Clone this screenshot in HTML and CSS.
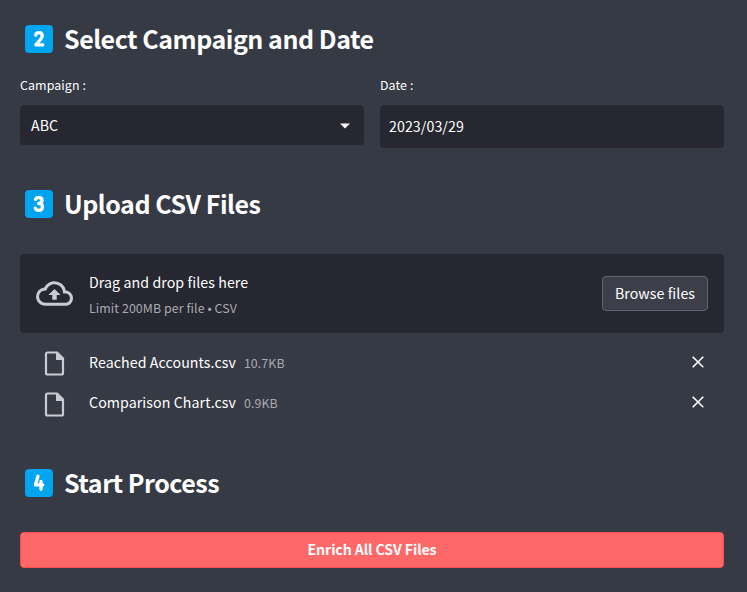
FILE: index.html
```
<!DOCTYPE html>
<html lang="en">
<head>
<meta charset="utf-8">
<title>Campaign enrichment</title>
<link rel="stylesheet" href="styles.css">
</head>
<body>
<main class="page">
  <h2 class="heading"><svg class="keycap" viewBox="0 0 28 28"><rect width="28" height="28" rx="4"/><path d="M10.8 10Q11.2 7.7 13.9 7.7Q17.4 7.7 17.2 10.8Q17 13.3 10.8 19.8H17.8"/></svg><span class="heading-text">Select Campaign and Date</span></h2>
  <div class="fields">
    <div class="field">
      <label class="label">Campaign :</label>
      <div class="control select"><span>ABC</span><svg class="caret" viewBox="0 0 10 6"><path d="M0 .5h10L5 5.5z"/></svg></div>
    </div>
    <div class="field">
      <label class="label">Date :</label>
      <div class="control date"><span>2023/03/29</span></div>
    </div>
  </div>
  <h2 class="heading upload-heading"><svg class="keycap" viewBox="0 0 28 28"><rect width="28" height="28" rx="4"/><path d="M10.5 9.3Q11.5 7.4 13.8 7.5Q17 7.7 17 10.3Q17 13.2 13.6 13.4Q17.5 13.5 17.5 16.8Q17.3 20.3 13.8 20.4Q11.2 20.4 10.3 18.2"/></svg><span class="heading-text">Upload CSV Files</span></h2>
  <section class="dropzone">
    <svg class="cloud" viewBox="0 0 24 24"><path d="M19.35 10.04A7.49 7.49 0 0012 4C9.11 4 6.6 5.64 5.35 8.04A5.994 5.994 0 000 14c0 3.31 2.69 6 6 6h13c2.76 0 5-2.24 5-5 0-2.64-2.05-4.78-4.65-4.96zM19 18H6c-2.21 0-4-1.79-4-4s1.79-4 4-4h.71C7.37 7.69 9.48 6 12 6c3.04 0 5.5 2.46 5.5 5.5v.5H19c1.66 0 3 1.34 3 3s-1.34 3-3 3zM8 13h2.55v3h2.9v-3H16l-4-4z"/></svg>
    <div class="drop-copy"><span class="drop-title">Drag and drop files here</span><small class="limit">Limit 200MB per file • CSV</small></div>
    <button class="browse">Browse files</button>
  </section>
  <ul class="files">
    <li class="file"><svg class="doc" viewBox="0 0 20 25"><path class="sheet" d="M3 1.5h9.5l6 6V22A1.5 1.5 0 0117 23.5H3A1.5 1.5 0 011.5 22V3A1.5 1.5 0 013 1.5z"/><path class="fold" d="M11.5 1h1.5l6.5 6.5V9h-8z"/></svg><span class="name">Reached Accounts.csv</span><small class="size">10.7KB</small><svg class="close" viewBox="0 0 12 12"><path d="M.7.7l10.6 10.6M11.3.7L.7 11.3"/></svg></li>
    <li class="file"><svg class="doc" viewBox="0 0 20 25"><path class="sheet" d="M3 1.5h9.5l6 6V22A1.5 1.5 0 0117 23.5H3A1.5 1.5 0 011.5 22V3A1.5 1.5 0 013 1.5z"/><path class="fold" d="M11.5 1h1.5l6.5 6.5V9h-8z"/></svg><span class="name">Comparison Chart.csv</span><small class="size">0.9KB</small><svg class="close" viewBox="0 0 12 12"><path d="M.7.7l10.6 10.6M11.3.7L.7 11.3"/></svg></li>
  </ul>
  <h2 class="heading start-heading"><svg class="keycap" viewBox="0 0 28 28"><rect width="28" height="28" rx="4"/><path d="M13 7.3L10.4 15.8H17.8M16 12.3V20.3"/></svg><span class="heading-text">Start Process</span></h2>
  <button class="enrich">Enrich All CSV Files</button>
</main>
</body>
</html>
```

FILE: styles.css
```
* { box-sizing: border-box; }
body {
  margin: 0;
  height: 592px;
  overflow: hidden;
  background: #363a45;
  color: #fff;
  font-family: "Noto Sans CJK JP", "Noto Sans", sans-serif;
  font-size: 14.2px;
  line-height: 24px;
}
svg { display: block; flex: none; }
.page { width: 704px; margin-left: 20px; padding-top: 19px; }
.heading {
  display: flex;
  align-items: center;
  height: 40px;
  margin: 0;
  padding-left: 5px;
  gap: 11px;
  font-size: 25px;
  font-weight: 700;
  letter-spacing: -.47px;
  line-height: 38px;
  white-space: nowrap;
}
.heading-text { padding-bottom: 2px; }
.keycap { width: 28px; height: 28px; }
.keycap rect { fill: #00a4ef; }
.keycap path { fill: none; stroke: #fff; stroke-width: 3.3; stroke-linecap: round; stroke-linejoin: round; }
.fields { display: grid; grid-template-columns: 344px 344px; gap: 16px; height: 104px; padding-top: 16px; }
.label { display: block; height: 30px; font-size: 12.4px; letter-spacing: .1px; line-height: 21px; }
.control { display: flex; align-items: center; background: #262730; border-radius: 4px; }
.select { height: 40px; padding: 0 14px 0 11px; justify-content: space-between; }
.caret { width: 10px; height: 6px; margin-top: 1px; fill: #fff; }
.date { height: 43px; padding: 0 0 1px 9px; letter-spacing: .08px; }
.upload-heading { margin-top: 21px; }
.dropzone { display: flex; align-items: center; height: 79px; margin-top: 30px; padding: 0 16px; background: #262730; border-radius: 4px; }
.cloud { width: 37px; height: 37px; fill: #c9cad4; }
.drop-copy { display: flex; flex-direction: column; flex: 1; margin-left: 16px; padding-top: 2px; letter-spacing: .08px; }
.limit, .size { font-size: 12.4px; letter-spacing: .08px; color: #a9aaae; }
.limit { margin-top: 1px; line-height: 26px; }
.drop-title { margin-top: 1px; }
.browse { width: 106px; height: 35px; padding: 0 0 2px; border: 1px solid #626570; border-radius: 4px; background: #3c3f4a; color: #fff; font: inherit; letter-spacing: .07px; white-space: nowrap; }
.files { height: 94px; margin: 10px 0 0; padding: 0; list-style: none; }
.file { display: flex; align-items: center; height: 40px; padding: 0 20px 0 24px; }
.file + .file .doc { margin-top: 2px; }
.doc { width: 21px; height: 25px; }
.sheet { fill: none; stroke: #c9cad4; stroke-width: 2.2; }
.fold { fill: #c9cad4; }
.name { margin: 0 0 2px 24px; letter-spacing: .08px; }
.size { margin: 0 0 1px 8px; }
.close { width: 12px; height: 12px; margin: 0 0 2px auto; }
.close path { stroke: #fff; stroke-width: 1.6; }
.start-heading { margin-top: 26px; }
.enrich { display: block; width: 704px; height: 36px; margin-top: 29px; padding: 0 0 2px; border: 1px solid #ff4b4b; border-radius: 4px; background: #ff6868; color: #fff; font: inherit; font-weight: 700; letter-spacing: -.12px; }
```
